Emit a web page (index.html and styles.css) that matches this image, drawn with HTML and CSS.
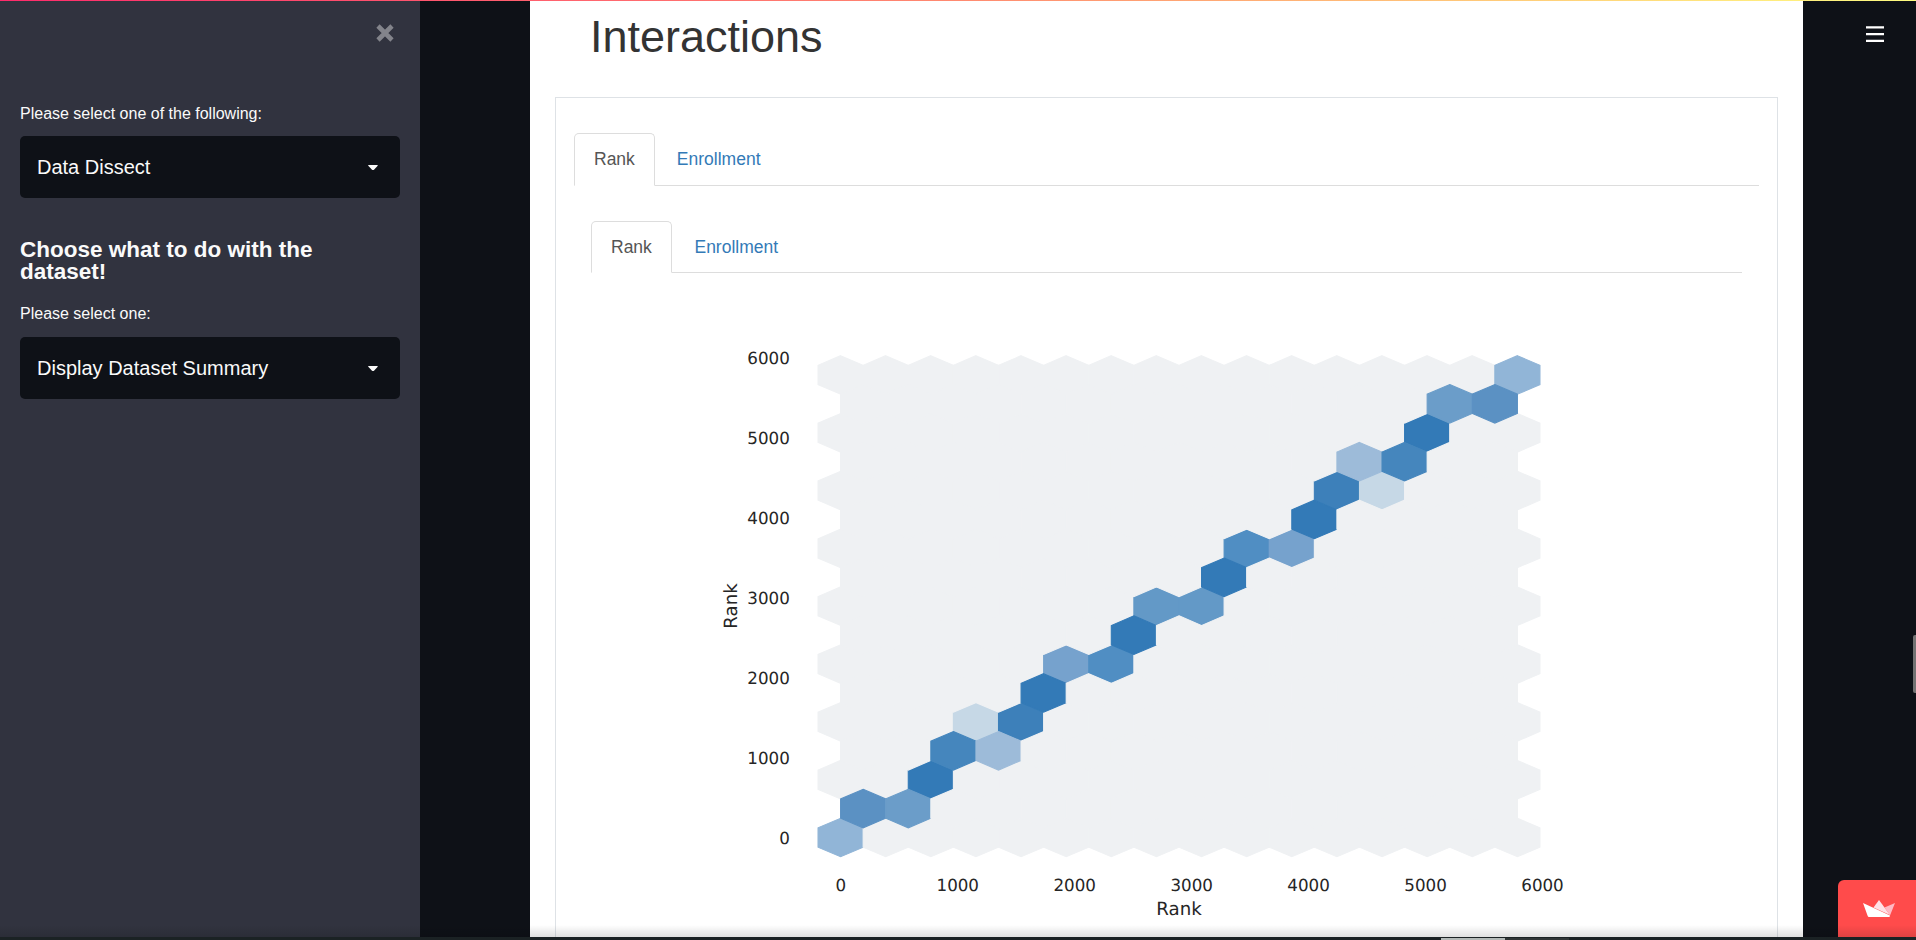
FILE: index.html
```
<!DOCTYPE html>
<html lang="en">
<head>
<meta charset="utf-8">
<title>Interactions</title>
<link rel="stylesheet" href="styles.css">
</head>
<body>
<div class="app">
  <aside class="sidebar">
    <div class="sidebar-top">
      <svg class="close" viewBox="0 0 18 18"><path d="M2 2L16 16M16 2L2 16"/></svg>
    </div>
    <label class="label">Please select one of the following:</label>
    <div class="select"><span>Data Dissect</span><svg class="caret" viewBox="0 0 10 6"><path d="M0 .6Q0 0 .7 0H9.300Q10 0 9.700.8L6 4.700Q5 5.500 4 4.700L.3.800Z"/></svg></div>
    <h3 class="heading">Choose what to do with the dataset!</h3>
    <label class="label second">Please select one:</label>
    <div class="select"><span>Display Dataset Summary</span><svg class="caret" viewBox="0 0 10 6"><path d="M0 .6Q0 0 .7 0H9.300Q10 0 9.700.8L6 4.700Q5 5.500 4 4.700L.3.800Z"/></svg></div>
  </aside>
  <main class="main">
    <section class="report">
      <h1 class="title">Interactions</h1>
      <div class="panel">
        <nav class="tabs"><a class="tab active">Rank</a><a class="tab">Enrollment</a></nav>
        <div class="inner">
          <nav class="tabs nested"><a class="tab active">Rank</a><a class="tab">Enrollment</a></nav>
          <svg class="chart" viewBox="591 273 1151 667" id="chart"></svg>
        </div>
      </div>
    </section>
  </main>
</div>
<div class="rainbow"></div>
<svg class="menu" viewBox="0 0 18 16"><path d="M0 1.400H18M0 8.100H18M0 14.900H18"/></svg>
<div class="scroll-thumb"></div>
<div class="badge"><svg class="boat" viewBox="0 0 32 17"><path class="mid" d="M16 0L10.500 7.600L27 15L21.500 7.400Z"/><path class="right" d="M32 3L21.500 7.400L27 15.500Z"/><path class="left" d="M0 3L27 15.500L26.500 17H6Q5 17 4.500 15.500Z"/></svg></div>
<div class="shade"></div>
<div class="taskbar"><div class="task-active"></div><div class="task-idle"></div></div>
<script src="chart.js"></script>
</body>
</html>
```
FILE: styles.css
```
* { box-sizing: border-box; }
body { margin: 0; height: 940px; overflow: hidden; background: #0e1117; font-family: "Liberation Sans", Arial, sans-serif; }
.app { display: flex; height: 940px; overflow: hidden; }
.sidebar { width: 420px; flex: none; background: #31333f; padding: 0 20px; color: #fafafa; }
.sidebar-top { height: 104px; padding: 24px 6px 0 0; display: flex; justify-content: flex-end; }
.close { width: 18px; height: 18px; }
.close path { stroke: #83848b; stroke-width: 4.6; fill: none; }
.label { display: block; font-size: 16px; line-height: 20px; height: 32px; }
.select { height: 62px; border-radius: 5px; background: #0e1117; display: flex; align-items: center; justify-content: space-between; padding: 0 22px 0 17px; font-size: 20px; }
.caret { width: 10px; height: 6px; margin-top: 1px; }
.caret path { fill: #fafafa; }
.heading { margin: 41px 0 0; font-size: 22.5px; line-height: 22px; width: 310px; height: 65px; font-weight: 700; }
.second { height: 33px; }
.main { flex: 1; padding-left: 110px; }
.report { width: 1273px; height: 940px; background: #fff; padding: 0 25px; }
.title { margin: 0; padding: 10px 0 0 35px; height: 97px; font-size: 45px; line-height: 54px; font-weight: 400; color: #333; }
.panel { height: 860px; border: 1px solid #dee2e6; padding: 35px 18px 0; }
.tabs { display: flex; height: 53px; border-bottom: 1px solid #ddd; }
.tabs.nested { height: 52px; }
.tab { height: 53px; padding: 0 19px; border: 1px solid transparent; font-size: 17.500px; line-height: 51px; color: #337ab7; margin-right: 2px; }
.nested .tab { height: 52px; }
.nested .active { margin-right: 2.6px; }
.tab.active { border-color: #ddd #ddd #fff; border-radius: 5px 5px 0 0; color: #555; background: #fff; }
.inner { padding: 35px 17px 0; }
.chart { display: block; width: 1151px; height: 667px; }
.chart text { font-family: "DejaVu Sans", sans-serif; font-size: 16.700px; fill: #262626; text-rendering: geometricPrecision; }
.chart .axis { font-size: 18.200px; }
.rainbow { position: absolute; top: 0; left: 0; width: 100%; height: 1px; background: linear-gradient(90deg, #ff2b6b, #ff8a70 50%, #fffd80); }
.menu { position: absolute; left: 1866px; top: 26px; width: 18px; height: 16px; }
.menu path { stroke: #fff; stroke-width: 2.200; }
.scroll-thumb { position: absolute; left: 1913px; top: 635px; width: 3px; height: 58px; background: #737373; border-radius: 2px 0 0 2px; }
.badge { position: absolute; left: 1838px; top: 880px; width: 78px; height: 57px; border-radius: 6px 0 0; background: #ff4b4b; }
.boat { display: block; width: 32px; height: 17px; margin: 20px 0 0 25px; }
.left { fill: #fff; }
.mid { fill: #ffe1e7; }
.right { fill: #ffb9c4; }
.shade { position: absolute; left: 0; top: 925px; width: 100%; height: 12px; background: linear-gradient(rgba(0,0,0,0), rgba(0,0,0,.12)); }
.taskbar { position: absolute; left: 0; top: 937px; width: 100%; height: 3px; background: #1b2224; display: flex; padding: 1px 0 0 1441px; }
.task-active { width: 64px; background: #b4bab8; }
.task-idle { width: 64px; background: #303636; }
```
FILE: chart.js
```
const X0 = 840.6, Y0 = 837.5, DX = 45.12, DY = 57.82;
const A = { '0,0': '#91b5d7', '2,1': '#337ab7', '3,2': '#c6d8e6', '4,2': '#3d80ba', '5,3': '#76a2cd', '6,3': '#508ec3', '7,4': '#6399c7', '8,4': '#6399c7', '9,5': '#508ec3', '10,5': '#76a2cd', '11,6': '#3d80ba', '12,6': '#c6d8e6', '13,7': '#337ab7', '15,8': '#91b5d7' };
const B = { '0,0': '#5b91c3', '1,0': '#6b9dc9', '2,1': '#4586bd', '3,1': '#9dbbd9', '4,2': '#337ab7', '6,3': '#337ab7', '8,4': '#337ab7', '10,5': '#337ab7', '11,6': '#9dbbd9', '12,6': '#4586bd', '13,7': '#6b9dc9', '14,7': '#5b91c3' };
let out = '';
function lattice(cols, rows, offset, values) {
  for (let c = 0; c < cols; c++) for (let r = 0; r < rows; r++) {
    const x = X0 + (c + offset) * DX, y = Y0 - (r + offset) * DY;
    const w = DX / 2, h = DY / 3, k = DY / 6;
    const pts = [[x, y - h], [x + w, y - k], [x + w, y + k], [x, y + h], [x - w, y + k], [x - w, y - k]];
    const col = values[c + ',' + r] || '#eff1f3';
    out += `<polygon points="${pts.map(p => p[0].toFixed(2) + ',' + p[1].toFixed(2)).join(' ')}" fill="${col}" stroke="${col}" stroke-width="1.1"/>`;
  }
}
lattice(16, 9, 0, A);
lattice(15, 8, 0.5, B);
for (let i = 0; i <= 6; i++) {
  out += `<text x="${840.8 + i * 116.95}" y="890.5" text-anchor="middle">${i * 1000}</text>`;
  out += `<text x="789.8" y="${843.8 - i * 79.9}" text-anchor="end">${i * 1000}</text>`;
}
out += '<text class="axis" x="1179" y="914.5" text-anchor="middle">Rank</text>';
out += '<text class="axis" transform="translate(736.5 606) rotate(-90)" text-anchor="middle">Rank</text>';
document.getElementById('chart').innerHTML = out;
```
